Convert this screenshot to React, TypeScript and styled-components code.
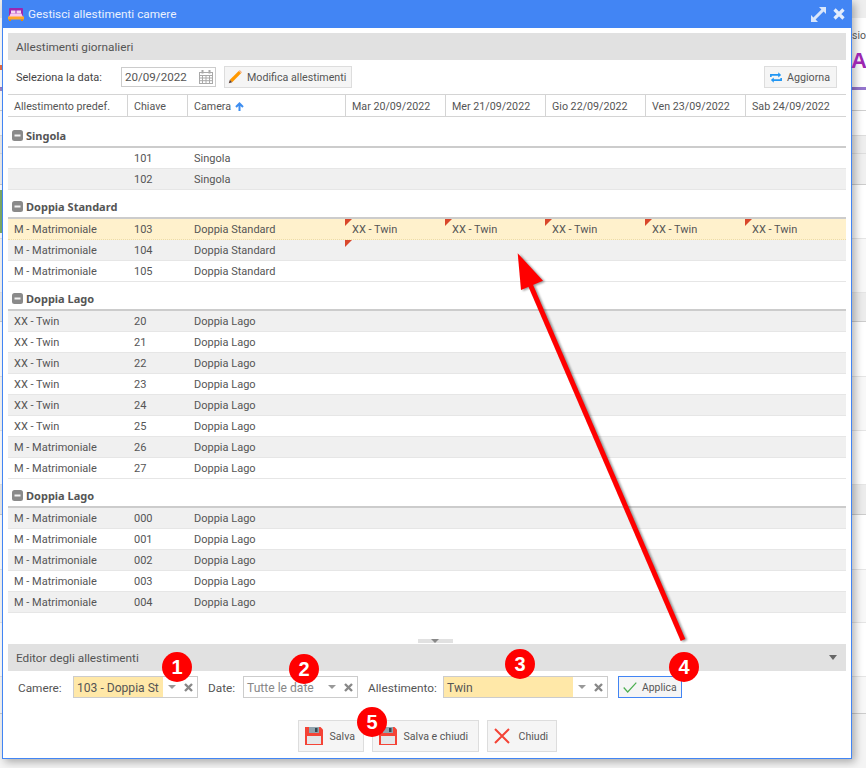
import React from "react";
import styled, { createGlobalStyle } from "styled-components";

type Row = { bed: string; key: string; room: string; tone?: "odd" | "even" | "picked"; days?: number; flags?: number };
type Group = { title: string; first?: boolean; rows: Array<Row> };

const days = ["Mar 20/09/2022", "Mer 21/09/2022", "Gio 22/09/2022", "Ven 23/09/2022", "Sab 24/09/2022"];

const MAT = "M - Matrimoniale";
const TWIN = "XX - Twin";

const groups: Array<Group> = [
  {
    title: "Singola",
    first: true,
    rows: [
      { bed: "", key: "101", room: "Singola" },
      { bed: "", key: "102", room: "Singola" },
    ],
  },
  {
    title: "Doppia Standard",
    rows: [
      { bed: MAT, key: "103", room: "Doppia Standard", tone: "picked", days: 5, flags: 5 },
      { bed: MAT, key: "104", room: "Doppia Standard", flags: 1 },
      { bed: MAT, key: "105", room: "Doppia Standard" },
    ],
  },
  {
    title: "Doppia Lago",
    rows: [
      { bed: TWIN, key: "20", room: "Doppia Lago" },
      { bed: TWIN, key: "21", room: "Doppia Lago" },
      { bed: TWIN, key: "22", room: "Doppia Lago" },
      { bed: TWIN, key: "23", room: "Doppia Lago" },
      { bed: TWIN, key: "24", room: "Doppia Lago" },
      { bed: TWIN, key: "25", room: "Doppia Lago" },
      { bed: MAT, key: "26", room: "Doppia Lago" },
      { bed: MAT, key: "27", room: "Doppia Lago" },
    ],
  },
  {
    title: "Doppia Lago",
    rows: [
      { bed: MAT, key: "000", room: "Doppia Lago" },
      { bed: MAT, key: "001", room: "Doppia Lago" },
      { bed: MAT, key: "002", room: "Doppia Lago" },
      { bed: MAT, key: "003", room: "Doppia Lago" },
      { bed: MAT, key: "004", room: "Doppia Lago" },
    ],
  },
];

const bands: Array<{ h: number; bg: string; line: string }> = [
  { h: 18, bg: "#eeeeee", line: "transparent" },
  { h: 72, bg: "#ffffff", line: "#e3e3e3" },
  { h: 21, bg: "#ffffff", line: "#cfcfcf" },
  { h: 25, bg: "#ffffff", line: "#dddddd" },
  { h: 18, bg: "#eeeeee", line: "#dddddd" },
  { h: 31, bg: "#f0f0f0", line: "#cccccc" },
  { h: 54, bg: "#ffffff", line: "#e5e5e5" },
  { h: 54, bg: "#f8f8f8", line: "#e5e5e5" },
  { h: 29, bg: "#ececec", line: "#cccccc" },
  { h: 55, bg: "#ffffff", line: "#e5e5e5" },
  { h: 54, bg: "#f8f8f8", line: "#e5e5e5" },
  { h: 54, bg: "#ffffff", line: "#e5e5e5" },
  { h: 30, bg: "#ececec", line: "#cccccc" },
  { h: 55, bg: "#ffffff", line: "#e5e5e5" },
  { h: 53, bg: "#f8f8f8", line: "#e5e5e5" },
  { h: 54, bg: "#ffffff", line: "#e5e5e5" },
  { h: 37, bg: "#f8f8f8", line: "#cccccc" },
];

const BedIcon = () => (
  <svg width="16" height="13" viewBox="0 0 16 13">
    <rect x="1" y="0" width="14" height="9" rx="1" fill="#9c27b0" />
    <rect x="3" y="2.5" width="4.5" height="3" fill="#f4d6f0" />
    <rect x="8.5" y="2.5" width="4.5" height="3" fill="#f4d6f0" />
    <path d="M1 9 L2.5 5.5 H13.5 L15 9 Z" fill="#f8c9ee" />
    <rect x="0" y="8.5" width="16" height="3" fill="#ffa726" />
    <rect x="1" y="11.5" width="2" height="1.5" fill="#ef8c00" />
    <rect x="13" y="11.5" width="2" height="1.5" fill="#ef8c00" />
  </svg>
);

const ExpandIcon = () => (
  <svg width="15" height="15" viewBox="0 0 15 15" fill="#d9e6fb">
    <path d="M8 0 H15 V7 L12.6 4.6 L4.6 12.6 L7 15 H0 V8 L2.4 10.4 L10.4 2.4 Z" />
  </svg>
);

const CloseIcon = () => (
  <svg width="12" height="12" viewBox="0 0 12 12" fill="none" stroke="#e3edfd" strokeWidth="3.2">
    <path d="M1.5 1.5 L10.5 10.5 M10.5 1.5 L1.5 10.5" />
  </svg>
);

const CalendarIcon = () => (
  <svg width="14" height="14" viewBox="0 0 14 14" fill="none" stroke="#a9a9a9" strokeWidth="1">
    <rect x="0.5" y="2.5" width="13" height="11" />
    <path d="M0.5 5.5 H13.5 M0.5 8 H13.5 M0.5 10.7 H13.5 M3.5 5.5 V13.5 M7 5.5 V13.5 M10.5 5.5 V13.5" />
    <path d="M3.5 0 V3.5 M10.5 0 V3.5" strokeWidth="2" />
  </svg>
);

const PencilIcon = () => (
  <svg width="14" height="14" viewBox="0 0 15 15">
    <path d="M11.5 1 L14 3.5 L4.5 13 L2 10.5 Z" fill="#ff9800" />
    <path d="M11.5 1 L12.6 0 L15 2.4 L14 3.5 Z" fill="#f4b183" />
    <path d="M2 10.5 L4.5 13 L0.8 14.2 Z" fill="#5d4037" />
  </svg>
);

const RefreshIcon = () => (
  <svg width="12" height="13" viewBox="0 0 14 14" fill="none" stroke="#2196f3" strokeWidth="1.9">
    <path d="M1 6.5 V4 H11" />
    <path d="M13 7.5 V10 H3" />
    <path d="M9.6 1 L13 4 L9.6 7 Z" fill="#2196f3" stroke="none" />
    <path d="M4.4 7 L1 10 L4.4 13 Z" fill="#2196f3" stroke="none" />
  </svg>
);

const SortIcon = () => (
  <svg width="9" height="9" viewBox="0 0 9 9" fill="none" stroke="#3d8df0" strokeWidth="2">
    <path d="M4.5 9 V2 M1 5 L4.5 1.5 L8 5" />
  </svg>
);

const MinusIcon = () => (
  <svg width="11" height="11" viewBox="0 0 11 11">
    <rect width="11" height="11" rx="2.5" fill="#8a8a8a" />
    <rect x="2.5" y="4.5" width="6" height="2" fill="#f2f2f2" />
  </svg>
);

const FloppyIcon = () => (
  <svg width="18" height="18" viewBox="0 0 18 18">
    <path d="M0 0 H15.5 L18 2.5 V18 H0 Z" fill="#f44336" />
    <rect x="4" y="0" width="10" height="6" fill="#90a4ae" />
    <rect x="10" y="1" width="2.5" height="4" fill="#37474f" />
    <rect x="2" y="9" width="14" height="8" fill="#e4e7e9" />
  </svg>
);

const CrossIcon = () => (
  <svg width="16" height="16" viewBox="0 0 16 16" fill="none" stroke="#f44336" strokeWidth="2">
    <path d="M1 1 L15 15 M15 1 L1 15" />
  </svg>
);

const CheckIcon = () => (
  <svg width="14" height="11" viewBox="0 0 14 11" fill="none" stroke="#4caf50" strokeWidth="1.2">
    <path d="M0.7 5.5 L4.7 10 L13.3 0.7" />
  </svg>
);

const App: React.FC = () => {
  return (
    <>
      <GlobalStyle />
      <Desktop>
        <Backdrop>
          <SideText>sion</SideText>
          <SideLetter>A</SideLetter>
          <PurpleLine />
          {bands.map((b, i) => (
            <Band key={i} $h={b.h} $bg={b.bg} $line={b.line} />
          ))}
        </Backdrop>
        <LeftMarks>
          <Mark $h={5} $top={65} $bg="#e8704a" />
          <Mark $h={3} $top={18} $bg="#9d8ac7" />
          <Mark $h={43} $top={99} $bg="#7fae68" />
        </LeftMarks>

        <Window>
          <TitleBar>
            <TitleLeft>
              <BedIcon />
              <TitleText>Gestisci allestimenti camere</TitleText>
            </TitleLeft>
            <TitleTools>
              <ExpandIcon />
              <CloseIcon />
            </TitleTools>
          </TitleBar>

          <Body>
            <PanelHead>Allestimenti giornalieri</PanelHead>
            <Toolbar>
              <ToolLabel>Seleziona la data:</ToolLabel>
              <DateBox>
                20/09/2022
                <CalendarIcon />
              </DateBox>
              <ToolButton $w={128} $gap={5}>
                <PencilIcon />
                Modifica allestimenti
              </ToolButton>
              <Spacer />
              <ToolButton $w={73} $gap={5} $right>
                <RefreshIcon />
                Aggiorna
              </ToolButton>
            </Toolbar>

            <GridHead>
              <HeadCell>Allestimento predef.</HeadCell>
              <HeadCell>Chiave</HeadCell>
              <HeadCell>
                Camera <SortIcon />
              </HeadCell>
              {days.map((d) => (
                <HeadCell key={d}>{d}</HeadCell>
              ))}
            </GridHead>

            <GridBody>
              {groups.map((g, gi) => (
                <div key={gi}>
                  <GroupHead $first={g.first}>
                    <MinusIcon />
                    {g.title}
                  </GroupHead>
                  {g.rows.map((r, ri) => (
                    <GridRow key={r.key} $tone={r.tone ?? (stripe(g, ri) ? "even" : "odd")}>
                      <Cell>{r.bed}</Cell>
                      <Cell>{r.key}</Cell>
                      <Cell>{r.room}</Cell>
                      {days.map((d, di) => (
                        <DayCell key={d} $flag={di < (r.flags ?? 0)}>
                          {di < (r.days ?? 0) ? TWIN : ""}
                        </DayCell>
                      ))}
                    </GridRow>
                  ))}
                </div>
              ))}
            </GridBody>

            <SplitRow>
              <SplitKnob />
            </SplitRow>

            <EditorHead>
              Editor degli allestimenti
              <HeadCaret />
            </EditorHead>

            <EditorRow>
              <EditorLabel $w={55}>Camere:</EditorLabel>
              <Combo $w={125}>
                <ComboValue $filled $w={89}>103 - Doppia St</ComboValue>
                <ComboTools />
              </Combo>
              <EditorLabel $w={35} $ml={10}>Date:</EditorLabel>
              <Combo $w={115}>
                <ComboValue $w={79} $muted>Tutte le date</ComboValue>
                <ComboTools />
              </Combo>
              <EditorLabel $w={75} $ml={10}>Allestimento:</EditorLabel>
              <Combo $w={165}>
                <ComboValue $filled $w={129}>Twin</ComboValue>
                <ComboTools />
              </Combo>
              <ApplyButton>
                <CheckIcon />
                Applica
              </ApplyButton>
            </EditorRow>

            <Footer>
              <FootButton $w={66}>
                <FloppyIcon />
                Salva
              </FootButton>
              <FootButton $w={107}>
                <FloppyIcon />
                Salva e chiudi
              </FootButton>
              <FootButton $w={70} $gap={9}>
                <CrossIcon />
                Chiudi
              </FootButton>
            </Footer>
          </Body>
        </Window>

        <ArrowLayer width="866" height="768" viewBox="0 0 866 768">
          <path d="M683 640 L530 284" stroke="#ff0000" strokeWidth="5" fill="none" />
          <path d="M517.7 253.3 L543 280.7 L521 290 Z" fill="#ff0000" />
        </ArrowLayer>
        <Badge $x={177} $y={667}>1</Badge>
        <Badge $x={304} $y={669}>2</Badge>
        <Badge $x={520} $y={664}>3</Badge>
        <Badge $x={684} $y={667}>4</Badge>
        <Badge $x={372} $y={722}>5</Badge>
      </Desktop>
    </>
  );
};

// rows are striped from the top of the whole grid, with a first row that stays white
function stripe(g: Group, i: number) {
  if (g.first) return i % 2 === 1;
  if (g.title === "Doppia Standard") return i % 2 === 1;
  return i % 2 === 0;
}

export default App;

const GlobalStyle = createGlobalStyle`
  html, body {
    margin: 0;
    padding: 0;
    background: #fff;
  }
  * {
    box-sizing: border-box;
  }
  svg {
    flex-shrink: 0;
  }
`;

const Desktop = styled.div`
  position: relative;
  width: 866px;
  height: 768px;
  overflow: hidden;
  font-family: Roboto, "Liberation Sans", sans-serif;
  font-size: 11px;
  color: #555;
`;

const Backdrop = styled.div`
  position: relative;
  width: 100%;
  height: 100%;
  background: #f4f4f4;
`;

const Band = styled.div<{ $h: number; $bg: string; $line: string }>`
  height: ${(p) => p.$h}px;
  background: ${(p) => p.$bg};
  border-bottom: 1px solid ${(p) => p.$line};
`;

const SideText = styled.div`
  position: absolute;
  left: 852px;
  top: 29px;
  font-size: 10.5px;
  color: #555;
  z-index: 1;
`;

const SideLetter = styled.div`
  position: absolute;
  left: 851px;
  top: 48px;
  font: bold 22px "Liberation Sans", sans-serif;
  color: #9c27b0;
  z-index: 1;
`;

const PurpleLine = styled.div`
  position: absolute;
  left: 0;
  right: 0;
  top: 87px;
  height: 3px;
  background: #9575cd;
`;

const LeftMarks = styled.div`
  position: absolute;
  left: 0;
  top: 0;
  width: 2px;
  height: 100%;
`;

const Mark = styled.div<{ $h: number; $top: number; $bg: string }>`
  height: ${(p) => p.$h}px;
  margin-top: ${(p) => p.$top}px;
  background: ${(p) => p.$bg};
`;

const Window = styled.div`
  position: absolute;
  left: 2px;
  top: 0;
  width: 850px;
  height: 759px;
  display: flex;
  flex-direction: column;
  background: #fff;
  border: 1px solid #4285f4;
  border-top: none;
  box-shadow: 3px 3px 8px rgba(0, 0, 0, 0.3);
`;

const TitleBar = styled.div`
  flex: 0 0 28px;
  margin: 0 -1px;
  display: flex;
  align-items: center;
  justify-content: space-between;
  padding: 0 7px 0 6px;
  background: #4285f4;
`;

const TitleLeft = styled.div`
  display: flex;
  align-items: center;
  gap: 4px;
`;

const TitleText = styled.span`
  color: #eaf1fe;
  font-size: 11.8px;
`;

const TitleTools = styled.div`
  display: flex;
  align-items: center;
  gap: 7px;
`;

const Body = styled.div`
  flex: 1;
  display: flex;
  flex-direction: column;
  padding: 5px 5px 0;
`;

const PanelHead = styled.div`
  flex: 0 0 27px;
  display: flex;
  align-items: center;
  padding-left: 8px;
  background: #e1e1e1;
  font-size: 11.8px;
  color: #555;
`;

const Toolbar = styled.div`
  flex: 0 0 34px;
  display: flex;
  align-items: center;
  padding: 0 9px 0 8px;
`;

const ToolLabel = styled.span`
  width: 105px;
  color: #444;
`;

const DateBox = styled.div`
  width: 95px;
  height: 20px;
  display: flex;
  align-items: center;
  justify-content: space-between;
  padding: 0 2px 0 3px;
  border: 1px solid #ccc;
  font-size: 11.6px;
`;

const ToolButton = styled.div<{ $w: number; $gap: number; $right?: boolean }>`
  width: ${(p) => p.$w}px;
  height: 22px;
  margin-left: ${(p) => (p.$right ? 0 : 8)}px;
  display: flex;
  align-items: center;
  gap: ${(p) => p.$gap}px;
  padding: 0 ${(p) => (p.$right ? 5 : 3)}px;
  background: #f5f5f5;
  border: 1px solid #ddd;
  font-size: 10.7px;
  white-space: nowrap;
`;

const Spacer = styled.div`
  flex: 1;
`;

const columns = "119px 60px 158px 100px 100px 100px 100px 101px";

const GridHead = styled.div`
  flex: 0 0 23px;
  display: grid;
  grid-template-columns: ${columns};
  border-top: 1px solid #d4d4d4;
  border-bottom: 1px solid #d4d4d4;
`;

const HeadCell = styled.div`
  display: flex;
  align-items: center;
  gap: 4px;
  padding: 2px 0 0 6px;
  border-left: 1px solid #d4d4d4;
  font-size: 10.7px;
  &:first-child {
    border-left: none;
  }
`;

const GridBody = styled.div`
  flex: 0 0 496px;
`;

const GroupHead = styled.div<{ $first?: boolean }>`
  height: ${(p) => (p.$first ? 31 : 29)}px;
  display: flex;
  align-items: center;
  gap: 3px;
  padding: ${(p) => (p.$first ? 8 : 6)}px 0 0 4px;
  border-bottom: 2px solid #ccc;
  font-family: "Noto Sans", sans-serif;
  font-size: 11px;
  font-weight: 700;
  color: #555;
`;

const toneBg = { odd: "#fff", even: "#f0f0f0", picked: "#fff1cc" };

const GridRow = styled.div<{ $tone: "odd" | "even" | "picked" }>`
  height: 21px;
  display: grid;
  grid-template-columns: ${columns};
  background: ${(p) => toneBg[p.$tone]};
  border-bottom: 1px ${(p) => (p.$tone === "picked" ? "dotted #ecdca8" : "solid #e6e6e6")};
`;

const Cell = styled.div`
  display: flex;
  align-items: center;
  padding-left: 7px;
  white-space: nowrap;
  &:first-child {
    padding-left: 6px;
  }
`;

const DayCell = styled(Cell)<{ $flag?: boolean }>`
  position: relative;
  &::before {
    content: "";
    display: ${(p) => (p.$flag ? "block" : "none")};
    position: absolute;
    left: 0;
    top: 0;
    border-style: solid;
    border-width: 7px 7px 0 0;
    border-color: #d9472b transparent transparent transparent;
  }
`;

const SplitRow = styled.div`
  flex: 0 0 31px;
  display: flex;
  justify-content: center;
  align-items: flex-end;
  padding: 0 0 1px 16px;
`;

const SplitKnob = styled.div`
  width: 35px;
  height: 4px;
  display: flex;
  justify-content: center;
  background: #e1e1e1;
  &::after {
    content: "";
    border-style: solid;
    border-width: 4px 4px 0 4px;
    border-color: #888 transparent transparent transparent;
  }
`;

const EditorHead = styled(PanelHead)`
  justify-content: space-between;
  padding-right: 9px;
`;

const HeadCaret = styled.span`
  border-style: solid;
  border-width: 5px 4.5px 0 4.5px;
  border-color: #666 transparent transparent transparent;
`;

const EditorRow = styled.div`
  flex: 0 0 44px;
  display: flex;
  align-items: flex-start;
  padding: 5px 0 0 10px;
`;

const EditorLabel = styled.span<{ $w: number; $ml?: number }>`
  width: ${(p) => p.$w}px;
  height: 22px;
  line-height: 24px;
  margin-left: ${(p) => p.$ml ?? 0}px;
  white-space: nowrap;
  font-size: 11.8px;
`;

const Combo = styled.div<{ $w: number }>`
  width: ${(p) => p.$w}px;
  height: 22px;
  display: flex;
  border: 1px solid #ccc;
`;

const ComboValue = styled.div<{ $filled?: boolean; $muted?: boolean; $w: number }>`
  width: ${(p) => p.$w}px;
  display: flex;
  align-items: center;
  padding: 2px 0 0 3px;
  overflow: hidden;
  white-space: nowrap;
  font-size: 12.1px;
  color: ${(p) => (p.$muted ? "#888" : "#555")};
  background: ${(p) => (p.$filled ? "#ffe8a8" : "#fff")};
`;

const ComboToolsBox = styled.div`
  flex: 1;
  display: flex;
  align-items: center;
  justify-content: space-between;
  padding: 0 4px 0 5px;
`;

const ComboCaret = styled.span`
  border-style: solid;
  border-width: 4px 4px 0 4px;
  border-color: #999 transparent transparent transparent;
`;

const ComboX = styled.svg`
  display: block;
`;

const ComboTools = () => (
  <ComboToolsBox>
    <ComboCaret />
    <ComboX width="9" height="9" viewBox="0 0 9 9" fill="none" stroke="#888" strokeWidth="2.4">
      <path d="M1 1 L8 8 M8 1 L1 8" />
    </ComboX>
  </ComboToolsBox>
);

const ApplyButton = styled.div`
  width: 64px;
  height: 22px;
  margin-left: 10px;
  display: flex;
  align-items: center;
  gap: 5px;
  padding-left: 4px;
  background: #f5f5f5;
  border: 1px solid #4285f4;
  font-size: 10.4px;
`;

const Footer = styled.div`
  display: flex;
  justify-content: center;
  gap: 8px;
  padding: 5px 0 0;
`;

const FootButton = styled.div<{ $w: number; $gap?: number }>`
  width: ${(p) => p.$w}px;
  height: 32px;
  display: flex;
  align-items: center;
  gap: ${(p) => p.$gap ?? 7}px;
  padding: 0 6px;
  background: #f5f5f5;
  border: 1px solid #ddd;
  font-size: 10.6px;
  white-space: nowrap;
`;

const ArrowLayer = styled.svg`
  position: absolute;
  left: 0;
  top: 0;
  pointer-events: none;
  filter: drop-shadow(2px 1px 1px rgba(0, 0, 0, 0.4));
`;

const Badge = styled.div<{ $x: number; $y: number }>`
  position: absolute;
  left: ${(p) => p.$x - 15}px;
  top: ${(p) => p.$y - 15}px;
  width: 30px;
  height: 30px;
  display: flex;
  align-items: center;
  justify-content: center;
  border-radius: 50%;
  background: #f00;
  color: #fff;
  font: bold 20px "Liberation Sans", sans-serif;
`;
